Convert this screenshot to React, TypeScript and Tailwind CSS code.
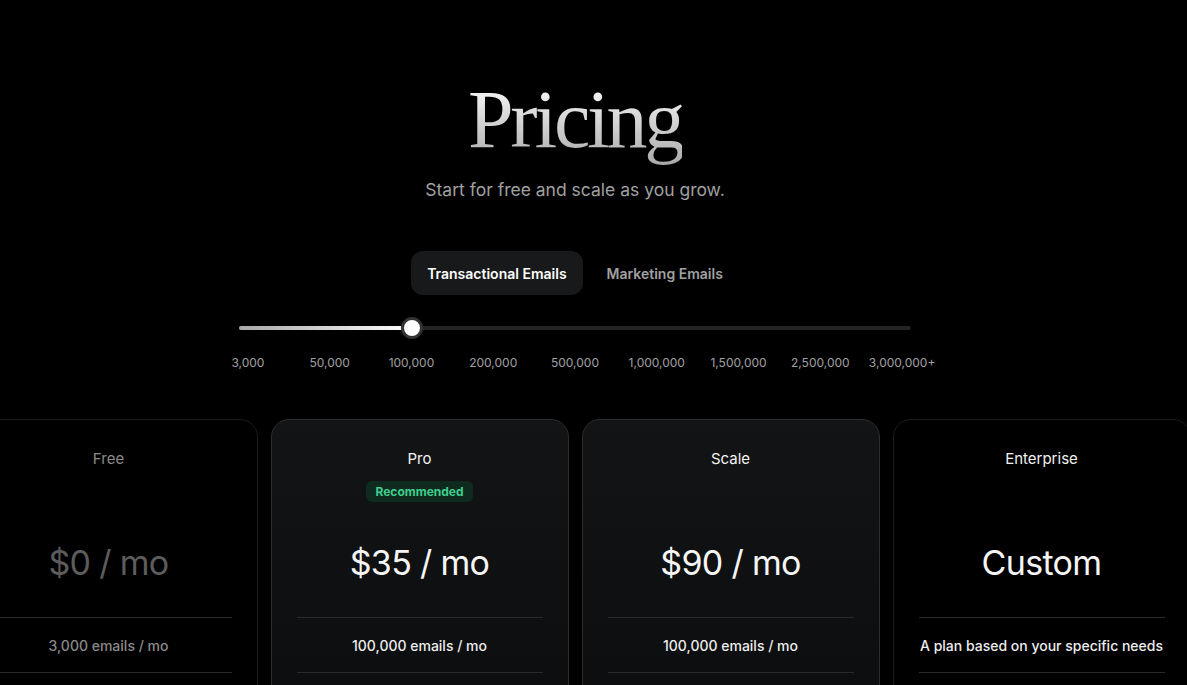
import React from "react";

const labels = ["3,000", "50,000", "100,000", "200,000", "500,000", "1,000,000", "1,500,000", "2,500,000", "3,000,000+"];

type Plan = {
  name: string;
  price: string;
  emails: string;
  badge?: boolean;
  variant: "dim" | "raised" | "plain";
};

const plans: Plan[] = [
  { name: "Free", price: "$0 / mo", emails: "3,000 emails / mo", variant: "dim" },
  { name: "Pro", price: "$35 / mo", emails: "100,000 emails / mo", badge: true, variant: "raised" },
  { name: "Scale", price: "$90 / mo", emails: "100,000 emails / mo", variant: "raised" },
  { name: "Enterprise", price: "Custom", emails: "A plan based on your specific needs", variant: "plain" },
];

function Card({ plan }: { plan: Plan }) {
  const dim = plan.variant === "dim";
  const raised = plan.variant === "raised";
  return (
    <div
      className={
        "w-[298px] h-[300px] shrink-0 rounded-[18px] border px-[25px] pt-[27px] flex flex-col " +
        (raised
          ? "bg-gradient-to-b from-[#131415] to-[#0c0d0e] border-[#2c2d2e]"
          : "bg-black border-[#1c1c1c]")
      }
    >
      <div className={"h-6 leading-6 text-[15px] text-center " + (dim ? "text-[#8a8a8a]" : "text-[#f2f2f2]")}>
        {plan.name}
      </div>
      <div className="h-[21px] mt-[10px] flex justify-center">
        {plan.badge && (
          <div className="h-[21px] px-[9px] rounded-[6px] bg-[#0f2a1e] text-[#3fcf8e] text-[12px] font-bold leading-[21px]">
            Recommended
          </div>
        )}
      </div>
      <div
        className={
          "mt-[41px] h-10 leading-10 text-[34px] text-center tracking-[-0.02em] " +
          (dim ? "text-[#5c5c5c]" : "text-[#f5f5f5]")
        }
      >
        {plan.price}
      </div>
      <div className="mt-[34px] border-t border-[#2a2a2a]" />
      <div
        className={
          "h-[54px] flex items-center justify-center text-[14px] font-medium " +
          (dim ? "text-[#8a8a8a]" : "text-[#ededed]")
        }
      >
        {plan.emails}
      </div>
      <div className="border-t border-[#2a2a2a]" />
    </div>
  );
}

export default function App() {
  return (
    <div
      className="w-[1187px] h-[685px] bg-black overflow-hidden"
      style={{ fontFamily: "Inter, 'Noto Sans', sans-serif" }}
    >
      <div className="w-[1150px] flex flex-col items-center">
        <h1
          className="mt-[79px] pb-[20px] -mb-[20px] leading-none text-[82px] tracking-[-0.04em] bg-gradient-to-b from-white to-[#9a9a9a] bg-clip-text text-transparent"
          style={{ fontFamily: "'Liberation Serif', 'DejaVu Serif', serif" }}
        >
          Pricing
        </h1>
        <p className="mt-[15px] h-7 leading-7 text-[17.5px] text-[#a1a1a1]">Start for free and scale as you grow.</p>

        <div className="mt-[47px] flex gap-2">
          <div className="h-[44px] px-4 rounded-xl bg-[#18191a] text-white text-[14px] font-semibold flex items-center">
            Transactional Emails
          </div>
          <div className="h-[44px] px-4 rounded-xl text-[#a1a1a1] text-[14px] font-semibold flex items-center">
            Marketing Emails
          </div>
        </div>

        <div className="mt-[23px] w-[672px] h-5 relative flex items-center">
          <div className="w-full h-1 rounded-full bg-[#242424]" />
          <div className="absolute left-0 top-[8px] w-[173px] h-1 rounded-full bg-gradient-to-r from-[#a8a8a8] to-white" />
          <div className="absolute left-[162px] top-0 w-[22px] h-[22px] -mt-[1px] rounded-full bg-white border-[3px] border-[#333]" />
        </div>

        <div className="mt-[17px] w-[736px] grid grid-cols-9 text-[12px] leading-4 text-[#a0a0a0] text-center">
          {labels.map((l) => (
            <div key={l}>{l}</div>
          ))}
        </div>

        <div className="mt-[48px] w-[1231px] flex gap-[13px] justify-center">
          {plans.map((p) => (
            <Card key={p.name} plan={p} />
          ))}
        </div>
      </div>
    </div>
  );
}
